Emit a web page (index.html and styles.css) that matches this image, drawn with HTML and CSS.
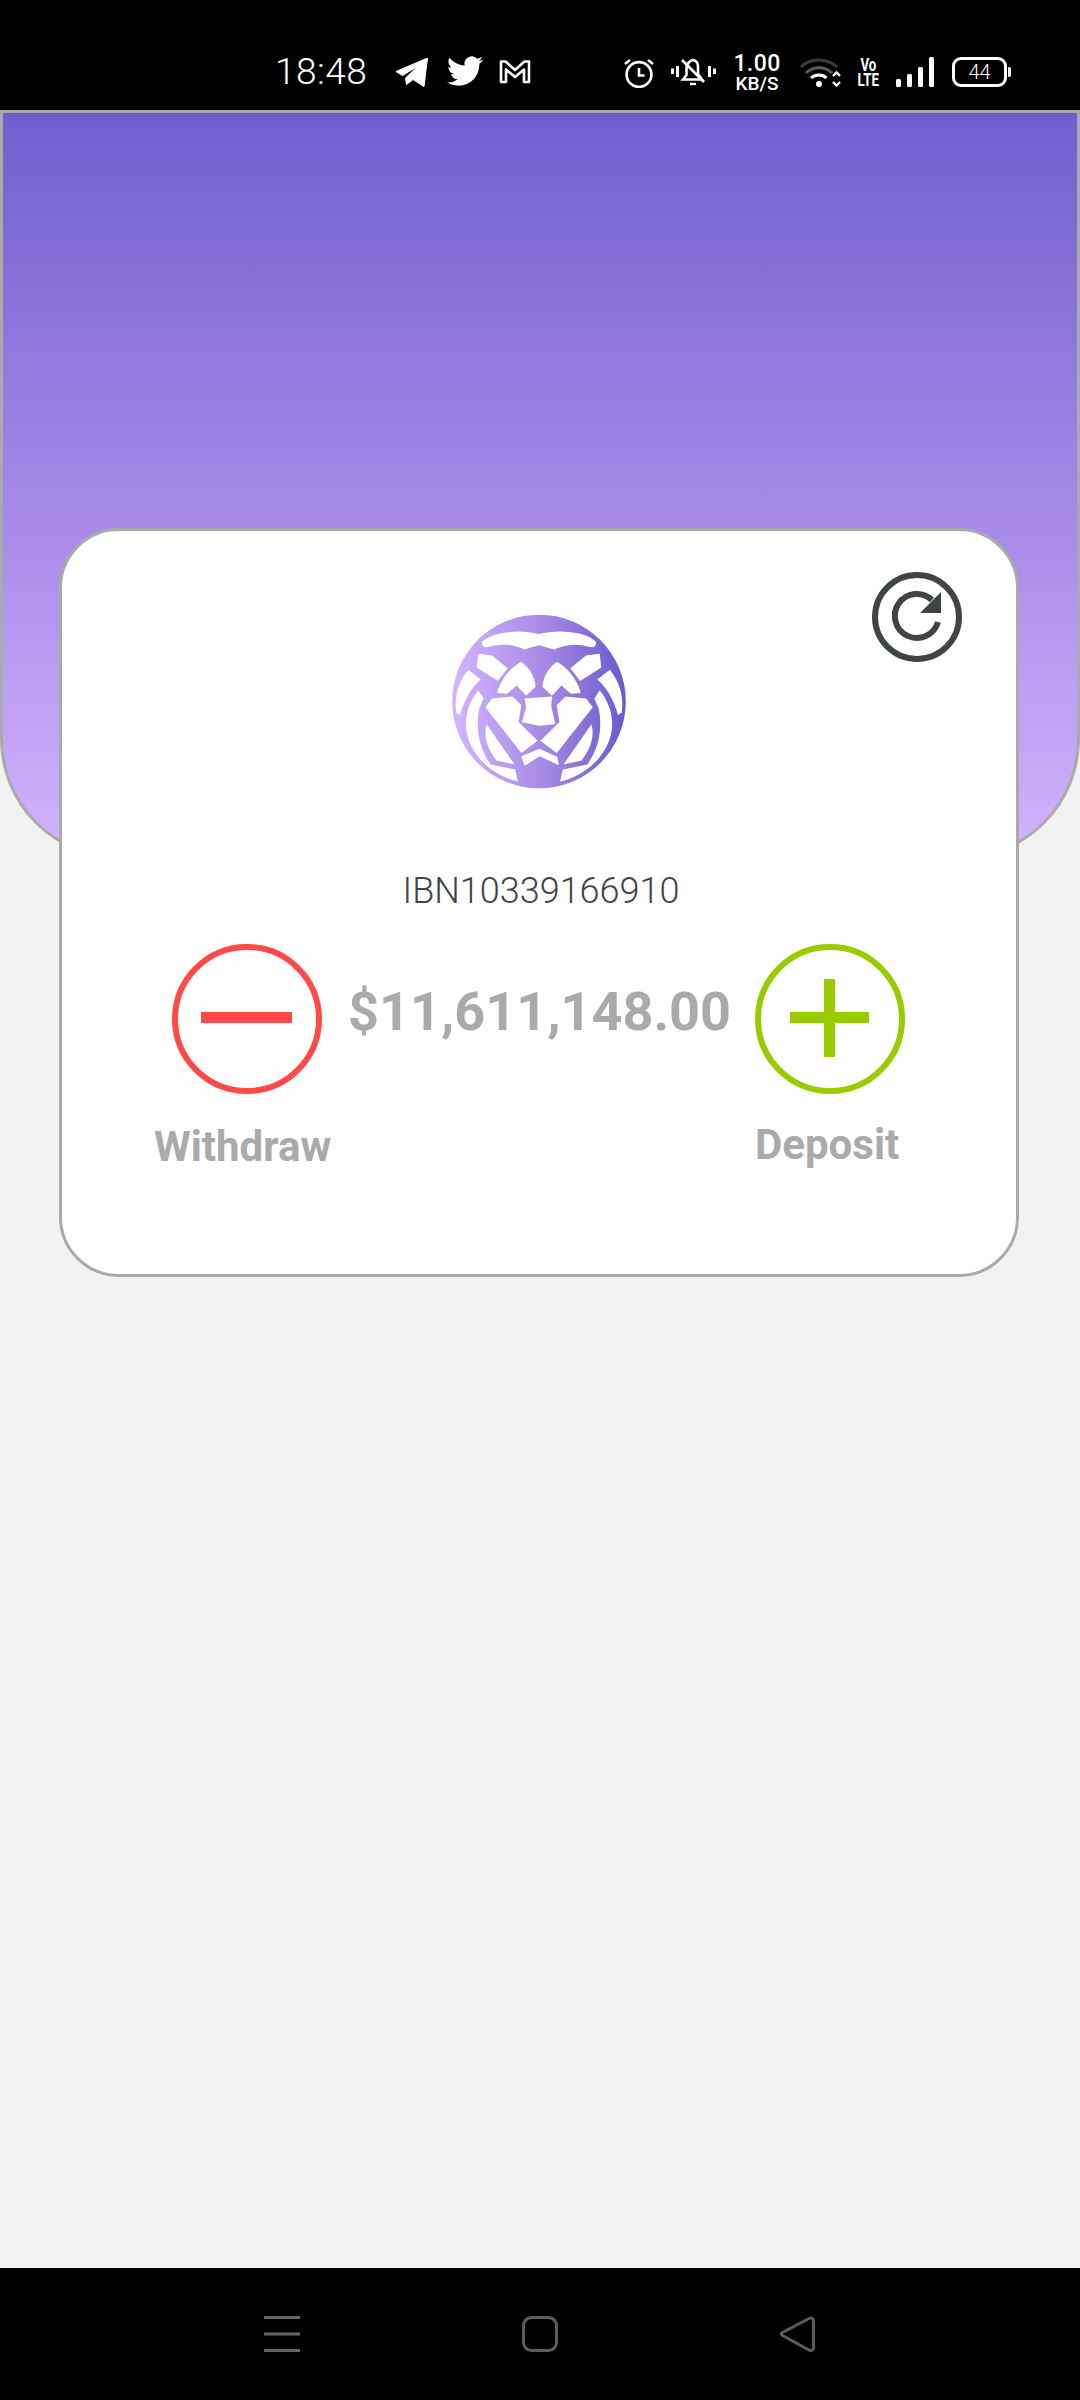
FILE: index.html
```html
<!DOCTYPE html>
<html lang="en">
<head>
<meta charset="utf-8">
<title>Wallet</title>
<link rel="stylesheet" href="styles.css">
</head>
<body>
<header class="statusbar">
  <span class="clock">18:48</span>
  <svg class="ic-telegram" viewBox="0 0 32 29"><path d="M0 13.5 31.5 0 28 28.5 17 21.5 10.5 26.5 9.5 20 22 8 6.5 17.5Z" fill="#fff" stroke="#fff" stroke-width="1" stroke-linejoin="round"/></svg>
  <svg class="ic-twitter" viewBox="0 0 24 24"><path fill="#fff" d="M23.95 4.57a10 10 0 0 1-2.82.78 4.96 4.96 0 0 0 2.16-2.72c-.95.55-2 .96-3.12 1.18a4.92 4.92 0 0 0-8.38 4.48C7.69 8.1 4.07 6.13 1.64 3.16a4.82 4.82 0 0 0-.67 2.48c0 1.71.87 3.21 2.19 4.1a4.9 4.9 0 0 1-2.23-.62v.06a4.92 4.92 0 0 0 3.95 4.83 5 5 0 0 1-2.21.08 4.94 4.94 0 0 0 4.6 3.42A9.87 9.87 0 0 1 0 19.54a14 14 0 0 0 7.56 2.21c9.05 0 14-7.5 14-13.98 0-.21 0-.42-.02-.63a9.94 9.94 0 0 0 2.46-2.55z"/></svg>
  <svg class="ic-mail" viewBox="0 0 32 25"><path d="M2 2.5H6.5L16 11 25.5 2.5H30V23H25V10.5L16 18 7 10.5V23H2Z" fill="none" stroke="#fff" stroke-width="2.6" stroke-linejoin="round"/></svg>
  <span class="status-spacer"></span>
  <svg class="ic-alarm" viewBox="0 0 30 31"><g fill="none" stroke="#fff" stroke-width="2.6"><circle cx="15" cy="17.5" r="12.4"/><path d="M15 11V18.5H20.5M1 7 6 3M29 7 24 3"/></g></svg>
  <svg class="ic-bell" viewBox="0 0 45 32"><g fill="none" stroke="#fff" stroke-width="2.6"><path d="M1.5 12.5V18M6.5 10V21M38.5 10V21M43.5 12.5V18" stroke-width="3"/><path d="M12 23.5H31L27 18V11C27 7 25 4.5 22 4 19 4.5 15.5 8 15.5 12V19Z"/><path d="M11 4 33 26"/><path d="M19 28H25" stroke-width="2.4"/></g></svg>
  <span class="speed"><span class="speed-num">1.00</span><span class="speed-unit">KB/S</span></span>
  <svg class="ic-wifi" viewBox="0 0 41 31"><g fill="none" stroke="#3c3c3c" stroke-width="3"><path d="M1 10C10 .5 27 .5 37 10"/><path d="M6 16C13 9 25 9 32 16" stroke="#5a5a5a"/></g><path d="M11 21C15.5 17 22.5 17 26.5 21" fill="none" stroke="#fff" stroke-width="3"/><circle cx="19" cy="27" r="3" fill="#fff"/><path d="M33 19 36.5 15.5 40 19M33 25 36.5 28.5 40 25" fill="none" stroke="#fff" stroke-width="2.4"/></svg>
  <span class="volte"><span>Vo</span><span>LTE</span></span>
  <svg class="ic-signal" viewBox="0 0 38 30"><g fill="#fff"><rect x="0" y="22" width="5" height="8" rx="1.5"/><rect x="11" y="17" width="5" height="13" rx="1.5"/><rect x="22" y="10" width="5" height="20" rx="1.5"/><rect x="33" y="0" width="5" height="30" rx="1.5"/></g></svg>
  <span class="battery"><span class="battery-level">44</span></span>
</header>

<main class="screen">
  <div class="banner"></div>
  <section class="card">
    <div class="card-top">
      <svg class="logo" viewBox="73 45 510 520">
        <defs>
          <linearGradient id="lionGrad" x1="0" y1="0" x2="1" y2="0">
            <stop offset="0" stop-color="#d3b5ff"/>
            <stop offset=".5" stop-color="#a88ce6"/>
            <stop offset="1" stop-color="#6a5acd"/>
          </linearGradient>
          <g id="lionHalf" fill="#fff">
            <path d="M150 165 190 170 236 207 207 245 145 205Z"/>
            <path d="M120 212 157 240C130 262 108 300 96 345L85 338C78 290 92 245 120 212Z"/>
            <path d="M150 272 165 296 152 328C142 380 150 440 186 490L258 505 266 540C200 525 145 480 122 420 102 365 118 310 150 272Z"/>
            <path d="M275 188C300 205 316 232 318 262L290 288 262 258 235 282 205 280C215 240 245 205 275 188Z"/>
            <path d="M190 296 250 290 276 315 268 365 324 420 276 456 170 322Z"/>
            <path d="M174 372 256 490 203 478C176 445 164 405 174 372Z"/>
          </g>
        </defs>
        <circle cx="328" cy="305" r="255" fill="url(#lionGrad)"/>
        <use href="#lionHalf"/>
        <use href="#lionHalf" transform="matrix(-1 0 0 1 656 0)"/>
        <path fill="#fff" d="M160 130C190 100 270 92 328 107 386 92 466 100 496 130 494 152 480 146 455 140 420 134 395 142 372 152L328 140 284 152C261 142 236 134 201 140 176 146 162 152 160 130Z"/>
        <path fill="#fff" d="M286 296 366 290 364 320 376 372 328 376 278 366 290 322Z"/>
        <path fill="#fff" d="M276 466 330 444 382 468 386 492 330 466 286 494Z"/>
      </svg>
      <svg class="refresh" viewBox="0 0 90 90"><g fill="none" stroke="#3f4444" stroke-width="6"><circle cx="45" cy="45" r="42"/><path d="M60 28A22 22 0 1 0 66 50"/></g><path fill="#3f4444" d="M69 20V41H48Z"/></svg>
    </div>
    <p class="iban">IBN10339166910</p>
    <div class="actions">
      <div class="action action-withdraw">
        <div class="circle circle-red"><svg viewBox="0 0 138 138"><rect x="23" y="62" width="91" height="11" fill="#ff4a4a"/></svg></div>
        <span class="action-label">Withdraw</span>
      </div>
      <div class="amount">$11,611,148.00</div>
      <div class="action action-deposit">
        <div class="circle circle-green"><svg viewBox="0 0 138 138"><path fill="#99cc00" d="M29 62H63V29H74V62H108V73H74V107H63V73H29Z"/></svg></div>
        <span class="action-label">Deposit</span>
      </div>
    </div>
  </section>
</main>

<footer class="navbar">
  <svg class="nav-menu" viewBox="0 0 36 36"><path d="M0 1.5H36M0 18H36M0 34.5H36" stroke="#666" stroke-width="3"/></svg>
  <svg class="nav-home" viewBox="0 0 36 36"><rect x="1.5" y="1.5" width="33" height="33" rx="8" fill="none" stroke="#5c5c5c" stroke-width="3"/></svg>
  <svg class="nav-back" viewBox="0 0 36 36"><path d="M29 2.5 2.5 16.5C1 17.500 1 18.500 2.500 19.500L29 34C31.500 35 33.500 34 33.500 32V4.500C33.500 2.500 31.500 1.500 29 2.500Z" fill="none" stroke="#5c5c5c" stroke-width="3"/></svg>
</footer>
</body>
</html>
```

FILE: styles.css
```css
* { box-sizing: border-box; }
html, body { margin: 0; padding: 0; }
body {
  width: 1080px;
  height: 2400px;
  display: flex;
  flex-direction: column;
  background: #f2f2f2;
  font-family: Roboto, "Liberation Sans", sans-serif;
  overflow: hidden;
}

/* status bar */
.statusbar {
  flex: none;
  height: 110px;
  background: #000;
  color: #fff;
  display: flex;
  align-items: flex-start;
  padding-left: 275px;
}
.statusbar svg { flex: none; display: block; }
.clock { font-size: 37px; font-weight: 300; line-height: 43px; margin-top: 50px; width: 121px; letter-spacing: .5px; }
.ic-telegram { width: 32px; height: 29px; margin-top: 58px; }
.ic-twitter { width: 36px; height: 36px; margin: 53px 0 0 19px; }
.ic-mail { width: 32px; height: 25px; margin: 59px 0 0 16px; }
.status-spacer { width: 93px; flex: none; }
.ic-alarm { width: 30px; height: 31px; margin-top: 57px; }
.ic-bell { width: 45px; height: 32px; margin: 56px 0 0 17px; }
.speed { display: flex; flex-direction: column; align-items: center; width: 50px; margin: 52px 0 0 16px; font-weight: 500; }
.speed-num { font-size: 23px; line-height: 24px; letter-spacing: .4px; }
.speed-unit { font-size: 19px; line-height: 15px; }
.ic-wifi { width: 41px; height: 31px; margin: 57px 0 0 18px; }
.volte { display: flex; flex-direction: column; align-items: center; width: 24px; margin: 57px 0 0 15px; font-size: 19px; line-height: 15px; font-weight: 700; }
.volte span { transform: scaleX(.7); }
.ic-signal { width: 38px; height: 30px; margin: 57px 0 0 16px; }
.battery { position: relative; width: 55px; height: 30px; margin: 57px 0 0 18px; border: 3px solid #fff; border-radius: 9px; display: flex; align-items: center; justify-content: center; }
.battery::after { content: ""; position: absolute; right: -7px; top: 7px; width: 3px; height: 10px; background: #fff; border-radius: 0 2px 2px 0; }
.battery-level { font-size: 20px; font-weight: 300; line-height: 24px; }

/* main area */
.screen { flex: 1; min-height: 0; }
.banner {
  height: 749px;
  border: 3px solid #aaa;
  border-radius: 0 0 120px 120px;
  background: linear-gradient(180deg, #6f5fcd 0%, #a78ae8 55%, #d2b3ff 100%);
}
.card {
  width: 960px;
  height: 749px;
  margin: -331px 0 0 59px;
  border: 3px solid #aaa;
  border-radius: 60px;
  background: #fff;
  position: relative;
}
.card-top {
  display: grid;
  grid-template-columns: 1fr auto 1fr;
  padding: 41px 54px 0;
}
.logo { grid-column: 2; grid-row: 1; width: 174px; height: 177px; margin-top: 41px; display: block; }
.refresh { grid-column: 3; grid-row: 1; justify-self: end; width: 90px; height: 90px; display: block; }
.iban {
  margin: 81px 0 0;
  padding-left: 4px;
  text-align: center;
  font-size: 36px;
  line-height: 40px;
  font-weight: 300;
  color: #444;
}
.actions { display: flex; align-items: flex-start; margin-top: 33px; padding-left: 92px; }
.action { display: flex; flex-direction: column; }
.action-withdraw { width: 176px; }
.action-deposit { width: 150px; margin-left: 26px; }
.circle { width: 150px; height: 150px; border-radius: 50%; border: 6px solid; flex: none; }
.circle svg { display: block; width: 138px; height: 138px; }
.circle-red { border-color: #ff4a4a; margin-left: 18px; }
.circle-green { border-color: #99cc00; }
.action-label { font-size: 42px; line-height: 48px; font-weight: 700; color: #aaa; white-space: nowrap; }
.action-withdraw .action-label { margin-top: 29px; }
.action-deposit .action-label { margin-top: 27px; }
.amount { width: 381px; margin: 38px 0 0 18px; font-size: 54px; line-height: 60px; font-weight: 700; color: #aaa; white-space: nowrap; }

/* nav bar */
.navbar {
  flex: none;
  height: 132px;
  background: #000;
  display: flex;
  align-items: flex-start;
  padding: 48px 0 0 264px;
}
.navbar svg { display: block; width: 36px; height: 36px; flex: none; }
.nav-home { margin-left: 222px; }
.nav-back { margin-left: 222px; }
```
